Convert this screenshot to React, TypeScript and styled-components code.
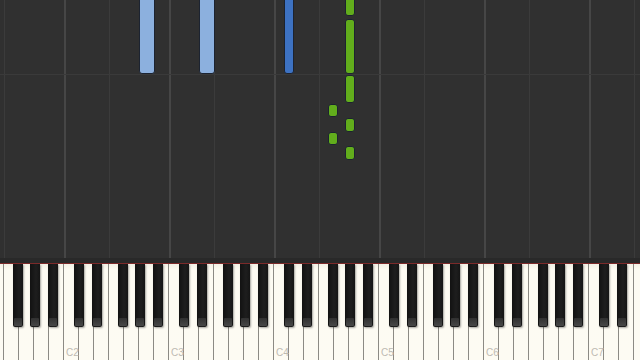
import styled, { createGlobalStyle } from 'styled-components'

const GlobalStyle = createGlobalStyle`
  html, body {
    margin: 0;
    padding: 0;
    background: #303030;
    overflow: hidden;
  }
`

const WHITE_W = 15
const OCTAVE_W = 105
const C2_X = 64
const BLACK_OFFSETS = [10, 28, 53.5, 71, 89]
const WHITE_NAMES = ['C', 'D', 'E', 'F', 'G', 'A', 'B']

const Screen = styled.div`
  width: 640px;
  height: 360px;
  display: flex;
  flex-direction: column;
  overflow: hidden;
  background: #303030;
`

const Roll = styled.div`
  position: relative;
  height: 258px;
  flex: none;
  background: #303030;
  overflow: hidden;
`

const RollEdge = styled.div`
  height: 5px;
  flex: none;
  background: #292929;
  border-bottom: 1px solid #7c2a2a;
`

const GridLine = styled.div<{ $x: number; $strong?: boolean }>`
  position: absolute;
  top: 0;
  bottom: 0;
  left: ${p => p.$x}px;
  width: ${p => (p.$strong ? 2 : 1)}px;
  background: ${p => (p.$strong ? '#464646' : '#3b3b3b')};
`

const BeatLine = styled.div<{ $y: number }>`
  position: absolute;
  left: 0;
  right: 0;
  top: ${p => p.$y}px;
  height: 1px;
  background: #3a3a3a;
`

const noteColors = {
  light: '#8cb0de',
  dark: '#3d72c2',
  green: '#62ad1c',
}

const Note = styled.div<{ $x: number; $y: number; $w: number; $h: number; $c: keyof typeof noteColors }>`
  position: absolute;
  left: ${p => p.$x}px;
  top: ${p => p.$y}px;
  width: ${p => p.$w}px;
  height: ${p => p.$h}px;
  box-sizing: border-box;
  background: ${p => noteColors[p.$c]};
  border: 1px solid #1c2330;
  border-radius: 3px;
`

const Keyboard = styled.div`
  position: relative;
  flex: 1;
  overflow: hidden;
  background: #fbf9ef;
`

const WhiteRow = styled.div`
  display: flex;
  height: 100%;
  margin-left: -11px;
`

const WhiteKey = styled.div`
  position: relative;
  flex: none;
  width: ${WHITE_W}px;
  height: 100%;
  box-sizing: border-box;
  background: linear-gradient(#f3f1e6 0, #fdfbf2 6px, #fdfbf3 100%);
  border-right: 1px solid #8c8a84;
`

const KeyLabel = styled.span`
  position: absolute;
  left: 2px;
  bottom: 2px;
  font-family: 'Liberation Sans', Arial, sans-serif;
  font-size: 10px;
  color: #bdbab2;
  line-height: 1;
`

const BlackKey = styled.div<{ $x: number }>`
  position: absolute;
  top: 0;
  left: ${p => p.$x}px;
  width: 10px;
  height: 63px;
  box-sizing: border-box;
  background: linear-gradient(90deg, #121212 0, #1e1e1e 60%, #151515 100%);
  border-radius: 0 0 2px 2px;
  box-shadow: 1px 1px 2px rgba(0, 0, 0, 0.35);

  &::after {
    content: '';
    position: absolute;
    left: 1px;
    right: 1px;
    bottom: 1px;
    height: 8px;
    border-radius: 1px;
    background: linear-gradient(#303030, #474747);
  }
`

// white keys from E1 onwards
const whiteKeys = Array.from({ length: 44 }, (_, i) => {
  const n = i + 2
  const name = WHITE_NAMES[n % 7]
  const octave = 1 + Math.floor(n / 7)
  return { name, octave }
})

const blackKeys: number[] = []
for (let o = 1; o <= 7; o++) {
  const cx = C2_X + (o - 2) * OCTAVE_W
  BLACK_OFFSETS.forEach(off => {
    const x = cx + off
    if (x > -10 && x < 640) blackKeys.push(x)
  })
}

const gridLines: { x: number; strong: boolean }[] = []
for (let o = 1; o <= 7; o++) {
  const cx = C2_X + (o - 2) * OCTAVE_W
  if (cx >= 0) gridLines.push({ x: cx, strong: true })
  gridLines.push({ x: cx + 45, strong: false })
}

const notes: { x: number; y: number; w: number; h: number; c: keyof typeof noteColors }[] = [
  { x: 139, y: -6, w: 16, h: 80, c: 'light' },
  { x: 199, y: -6, w: 16, h: 80, c: 'light' },
  { x: 284, y: -6, w: 10, h: 80, c: 'dark' },
  { x: 345, y: -6, w: 10, h: 22, c: 'green' },
  { x: 345, y: 19, w: 10, h: 55, c: 'green' },
  { x: 345, y: 75, w: 10, h: 28, c: 'green' },
  { x: 328, y: 104, w: 10, h: 13, c: 'green' },
  { x: 345, y: 118, w: 10, h: 14, c: 'green' },
  { x: 328, y: 132, w: 10, h: 13, c: 'green' },
  { x: 345, y: 146, w: 10, h: 14, c: 'green' },
]

export default function App() {
  return (
    <>
      <GlobalStyle />
      <Screen>
        <Roll>
          {gridLines.map(g => (
            <GridLine key={g.x} $x={g.x} $strong={g.strong} />
          ))}
          <BeatLine $y={74} />
          {notes.map((n, i) => (
            <Note key={i} $x={n.x} $y={n.y} $w={n.w} $h={n.h} $c={n.c} />
          ))}
        </Roll>
        <RollEdge />
        <Keyboard>
          <WhiteRow>
            {whiteKeys.map((k, i) => (
              <WhiteKey key={i}>
                {k.name === 'C' && <KeyLabel>C{k.octave}</KeyLabel>}
              </WhiteKey>
            ))}
          </WhiteRow>
          {blackKeys.map(x => (
            <BlackKey key={x} $x={x} />
          ))}
        </Keyboard>
      </Screen>
    </>
  )
}
